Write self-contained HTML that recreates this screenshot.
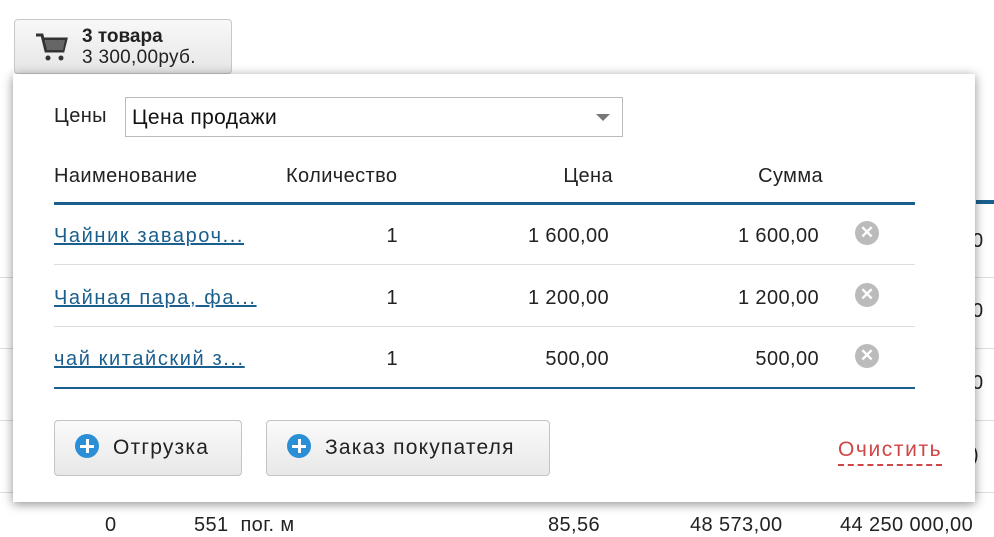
<!DOCTYPE html>
<html><head><meta charset="utf-8"><style>
body{margin:0;width:994px;height:524px;overflow:hidden;background:#fff;font-family:"Liberation Sans",Arial,sans-serif;position:relative;color:#222}
.a{position:absolute}
.bgl{position:absolute;left:0;width:994px;height:1px;background:#ddd}
.cart{left:14px;top:19px;width:216px;height:53px;border:1px solid #c8c8c8;border-radius:4px;background:linear-gradient(#f8f8f8,#e6e6e6)}
.pop{left:13px;top:74px;width:962px;height:428px;background:#fff;box-shadow:0 2px 10px rgba(0,0,0,.45)}
.t{font-size:20px;position:absolute;white-space:nowrap;letter-spacing:0.4px}
.r{text-align:right}
.lnk{color:#1a5f8e;text-decoration:underline;letter-spacing:1.6px}
.btn{position:absolute;top:346px;height:54px;border:1px solid #c4c4c4;border-radius:4px;background:linear-gradient(#fafafa,#e8e8e8);font-size:21px;line-height:54px;letter-spacing:1.2px;white-space:nowrap}
.plus{display:inline-block;width:24px;height:24px;border-radius:50%;background:#2a8fd6;position:relative;vertical-align:middle;margin:0 14px 0 20px;top:-2px}
.plus:before{content:"";position:absolute;left:5px;top:10.5px;width:14px;height:3px;background:#fff}
.plus:after{content:"";position:absolute;left:10.5px;top:5px;width:3px;height:14px;background:#fff}
.x{position:absolute;width:24px;height:24px;border-radius:50%;background:#bbb;color:#fff;font-size:17px;font-weight:bold;text-align:center;line-height:24px}
</style></head><body>
<div class="bgl" style="top:277px"></div><div class="bgl" style="top:348px"></div><div class="bgl" style="top:420px"></div><div class="bgl" style="top:492px"></div>
<div class="a" style="left:976px;top:200px;width:18px;height:4px;background:#1a5f8e"></div>
<div class="t" style="left:972px;top:230px">0</div><div class="t" style="left:972px;top:300px">0</div><div class="t" style="left:972px;top:372px">0</div><div class="t" style="left:972px;top:444px">)</div>
<div class="t" style="left:105px;top:514px">0 &nbsp;&nbsp;&nbsp;&nbsp;&nbsp;&nbsp;&nbsp;&nbsp;&nbsp;&nbsp;&nbsp;&nbsp;551 &nbsp;пог. м</div>
<div class="t" style="left:548px;top:514px">85,56</div><div class="t" style="left:690px;top:514px">48 573,00</div><div class="t" style="left:840px;top:514px">44 250 000,00</div>
<div class="a cart">
<svg class="a" style="left:20px;top:12px" width="34" height="32" viewBox="0 0 34 32"><path d="M1 3h6l4 16h17l3-12H9" fill="none" stroke="#333" stroke-width="3"/><path d="M10 8h20l-2 10H12z" fill="#666"/><circle cx="13" cy="26" r="2.5" fill="#333"/><circle cx="26" cy="26" r="2.5" fill="#333"/></svg>
<div class="a" style="left:67px;top:6px;font-size:19px;font-weight:bold;color:#222">3 товара</div>
<div class="a" style="left:67px;top:27px;font-size:19px;color:#222;letter-spacing:0.3px">3 300,00руб.</div>
</div>
<div class="a pop">
<div class="t" style="left:41px;top:31px">Цены</div>
<div class="a" style="left:112px;top:23px;width:496px;height:38px;border:1px solid #bbb;background:#fff"><div class="t" style="left:6px;top:8px;font-size:21px;color:#111">Цена продажи</div><div class="a" style="left:470px;top:16px;border:7px solid transparent;border-top:7px solid #777"></div></div>
<div class="t" style="left:41px;top:91px">Наименование</div>
<div class="t" style="left:273px;top:91px">Количество</div>
<div class="t r" style="left:450px;width:150px;top:91px">Цена</div>
<div class="t r" style="left:660px;width:150px;top:91px">Сумма</div>
<div class="a" style="left:41px;top:128px;width:861px;height:3px;background:#1a5f8e"></div>
<div class="a" style="left:41px;top:190px;width:861px;height:1px;background:#ddd"></div>
<div class="a" style="left:41px;top:252px;width:861px;height:1px;background:#ddd"></div>
<div class="a" style="left:41px;top:313px;width:861px;height:2px;background:#1a5f8e"></div>
<div class="t lnk" style="left:41px;top:151px">Чайник завароч...</div><div class="t r" style="left:285px;width:100px;top:151px">1</div><div class="t r" style="left:446px;width:150px;top:151px">1 600,00</div><div class="t r" style="left:656px;width:150px;top:151px">1 600,00</div><div class="x" style="left:842px;top:147px">✕</div>
<div class="t lnk" style="left:41px;top:213px">Чайная пара, фа...</div><div class="t r" style="left:285px;width:100px;top:213px">1</div><div class="t r" style="left:446px;width:150px;top:213px">1 200,00</div><div class="t r" style="left:656px;width:150px;top:213px">1 200,00</div><div class="x" style="left:842px;top:209px">✕</div>
<div class="t lnk" style="left:41px;top:274px">чай китайский з...</div><div class="t r" style="left:285px;width:100px;top:274px">1</div><div class="t r" style="left:446px;width:150px;top:274px">500,00</div><div class="t r" style="left:656px;width:150px;top:274px">500,00</div><div class="x" style="left:842px;top:270px">✕</div>
<div class="btn" style="left:41px;width:186px"><span class="plus"></span>Отгрузка</div>
<div class="btn" style="left:253px;width:282px"><span class="plus"></span>Заказ покупателя</div>
<div class="t" style="left:825px;top:364px;color:#d04545;font-size:21px;letter-spacing:1.6px;border-bottom:2px dashed #d04545;padding-bottom:2px">Очистить</div>
</div>
</body></html>
